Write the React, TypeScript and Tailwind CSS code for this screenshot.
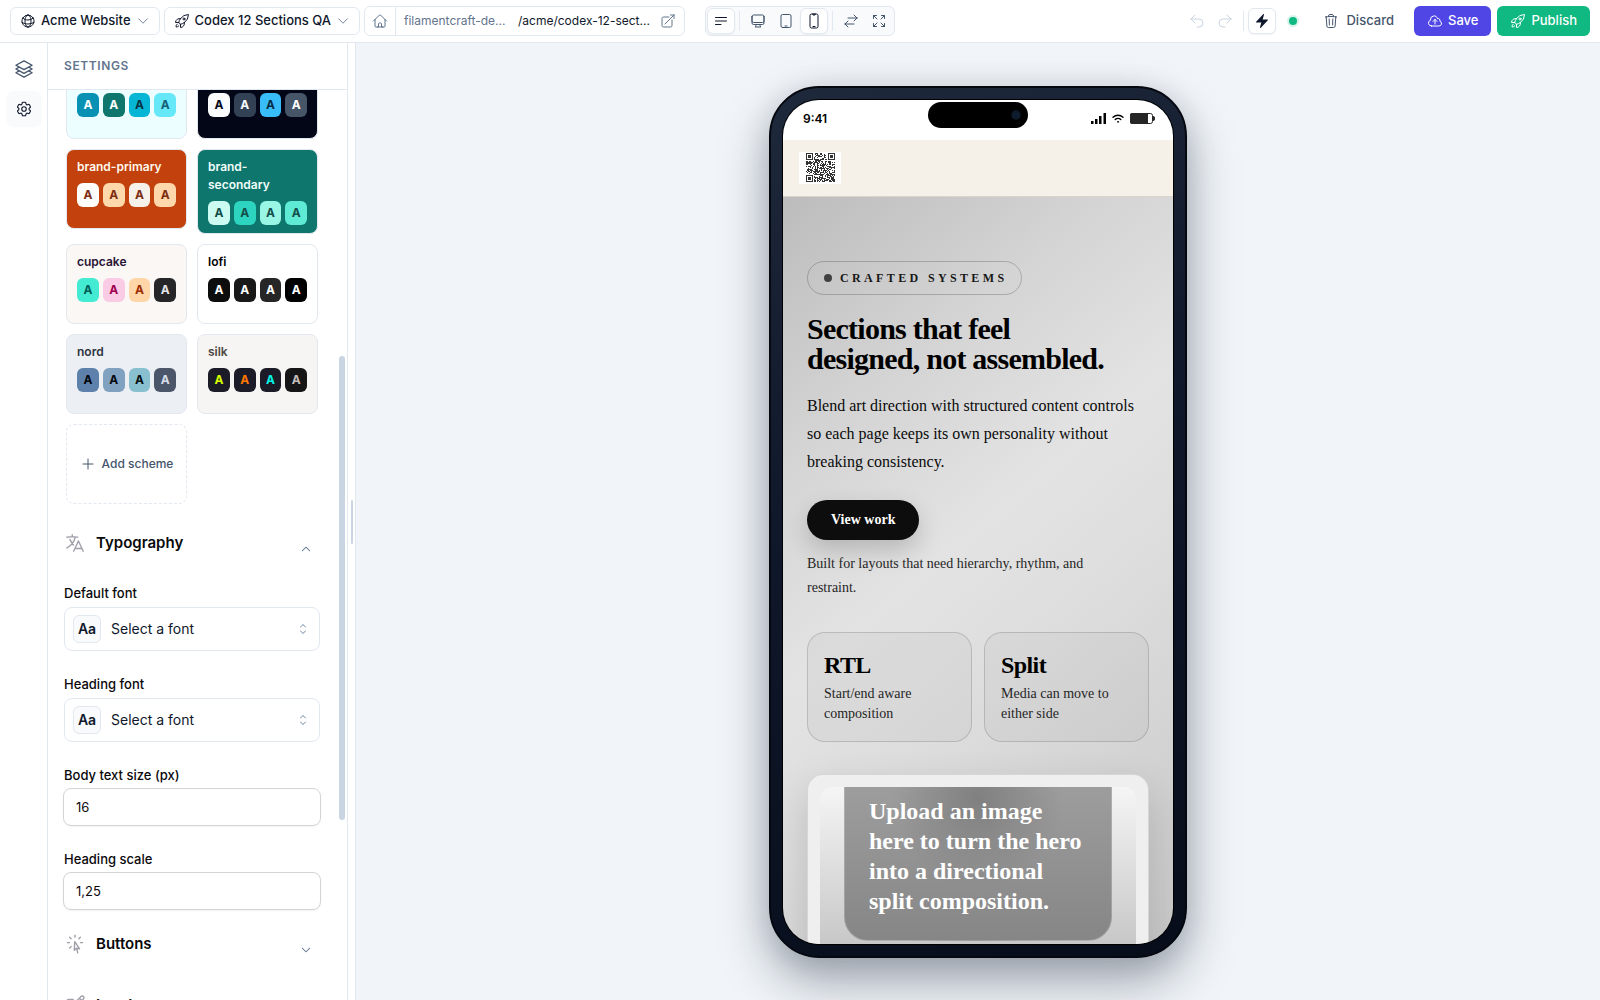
import type { ReactNode } from 'react'
import {
  HiBolt,
  HiChevronDown,
  HiChevronUp,
  HiChevronUpDown,
  HiOutlineArrowTopRightOnSquare,
  HiOutlineArrowUturnLeft,
  HiOutlineArrowUturnRight,
  HiOutlineArrowsPointingOut,
  HiOutlineArrowsRightLeft,
  HiOutlineBars3BottomLeft,
  HiOutlineChevronDown,
  HiOutlineCloudArrowUp,
  HiOutlineCog6Tooth,
  HiOutlineComputerDesktop,
  HiOutlineCursorArrowRays,
  HiOutlineDevicePhoneMobile,
  HiOutlineDeviceTablet,
  HiOutlineGlobeAlt,
  HiOutlineHome,
  HiOutlineLanguage,
  HiOutlinePencilSquare,
  HiOutlinePlus,
  HiOutlineRocketLaunch,
  HiOutlineSquare3Stack3D,
  HiOutlineTrash,
} from 'react-icons/hi2'

type Scheme = { id: string; name: string; card: string; swatches: string[] }

const schemes: Scheme[] = [
  {
    id: 's1',
    name: '',
    card: 'bg-[#ecfeff] border-slate-200',
    swatches: ['bg-[#0891b2] text-white', 'bg-[#0f766e] text-white', 'bg-[#06b6d4] text-[#083344]', 'bg-[#67e8f9] text-[#155e75]'],
  },
  {
    id: 's2',
    name: '',
    card: 'bg-[#020617] border-slate-200',
    swatches: ['bg-[#f8fafc] text-[#020617]', 'bg-[#334155] text-[#f8fafc]', 'bg-[#38bdf8] text-[#082f49]', 'bg-[#475569] text-white'],
  },
  {
    id: 's3',
    name: 'brand-primary',
    card: 'bg-[#c2410c] border-slate-200 text-[#fff7ed]',
    swatches: ['bg-[#fffdfa] text-[#7c2d12]', 'bg-[#fed7aa] text-[#7c2d12]', 'bg-[#f5f0e8] text-[#7c2d12]', 'bg-[#fed7aa] text-[#7c2d12]'],
  },
  {
    id: 's4',
    name: 'brand-secondary',
    card: 'bg-[#0f766e] border-slate-200 text-[#f0fdfa]',
    swatches: ['bg-[#ccfbf1] text-[#134e4a]', 'bg-[#2dd4bf] text-[#134e4a]', 'bg-[#99f6e4] text-[#134e4a]', 'bg-[#5eead4] text-[#134e4a]'],
  },
  {
    id: 's5',
    name: 'cupcake',
    card: 'bg-[#faf7f5] border-slate-200 text-[#291334]',
    swatches: ['bg-[#44ebd3] text-[#005d58]', 'bg-[#f9cbe5] text-[#a0004d]', 'bg-[#ffd6a7] text-[#9f2d00]', 'bg-[#262629] text-[#e4e4e7]'],
  },
  {
    id: 's6',
    name: 'lofi',
    card: 'bg-white border-slate-200 text-black',
    swatches: ['bg-[#0d0d0d] text-white', 'bg-[#1a1919] text-white', 'bg-[#262626] text-white', 'bg-black text-white'],
  },
  {
    id: 's7',
    name: 'nord',
    card: 'bg-[#eceff4] border-slate-200 text-[#2e3440]',
    swatches: ['bg-[#5e81ac] text-[#03060b]', 'bg-[#81a1c1] text-[#06090e]', 'bg-[#88c0d0] text-[#070e10]', 'bg-[#4c566a] text-[#d8dee9]'],
  },
  {
    id: 's8',
    name: 'silk',
    card: 'bg-[#f7f5f3] border-slate-200 text-[#4b4743]',
    swatches: ['bg-[#1c1c29] text-[#d9ff00]', 'bg-[#1c1c29] text-[#ff7700]', 'bg-[#1c1c29] text-[#00f5e4]', 'bg-[#161616] text-[#c4bfbb]'],
  },
]

function Divider() {
  return <span className="mx-1 h-5 w-px bg-slate-200" />
}

function IconButton({ label, active, children }: { label: string; active?: boolean; children: ReactNode }) {
  return (
    <button
      type="button"
      aria-label={label}
      className={
        active
          ? 'flex h-[26px] w-7 items-center justify-center rounded-md border border-slate-200 bg-white text-slate-900 shadow-xs'
          : 'flex h-[26px] w-7 items-center justify-center rounded-md text-slate-600'
      }
    >
      {children}
    </button>
  )
}

function TopBar() {
  return (
    <header className="flex h-[43px] shrink-0 items-center border-b border-slate-200 bg-white px-2.5 text-slate-900">
      <button type="button" className="flex h-7 items-center gap-[5px] rounded-md border border-slate-200 px-[9px] text-[13px] font-medium whitespace-nowrap">
        <HiOutlineGlobeAlt className="size-4" />
        Acme Website
        <HiOutlineChevronDown className="size-3.5 text-slate-500" />
      </button>
      <button type="button" className="ml-1 flex h-7 items-center gap-[5px] rounded-md border border-slate-200 px-[9px] text-[13px] font-medium whitespace-nowrap">
        <HiOutlineRocketLaunch className="size-4" />
        Codex 12 Sections QA
        <HiOutlineChevronDown className="size-3.5 text-slate-500" />
      </button>

      <div className="ml-1 flex h-[30px] w-[321px] items-center rounded-md border border-slate-200">
        <button type="button" aria-label="Home" className="flex h-full w-[31px] items-center justify-center border-r border-slate-200 text-slate-500">
          <HiOutlineHome className="size-4" />
        </button>
        <span className="ml-2 w-[114px] text-xs text-slate-500">filamentcraft-de...</span>
        <a href="#preview" className="flex flex-1 items-center justify-between pr-2 text-xs whitespace-nowrap">
          /acme/codex-12-sect...
          <HiOutlineArrowTopRightOnSquare className="size-4 text-slate-500" />
        </a>
      </div>

      <div className="ml-5 flex h-[30px] items-center rounded-md border border-slate-200 bg-slate-50 px-px">
        <IconButton label="Guides" active><HiOutlineBars3BottomLeft className="size-4" /></IconButton>
        <Divider />
        <IconButton label="Desktop"><HiOutlineComputerDesktop className="size-4" /></IconButton>
        <IconButton label="Tablet"><HiOutlineDeviceTablet className="size-4" /></IconButton>
        <IconButton label="Mobile" active><HiOutlineDevicePhoneMobile className="size-4" /></IconButton>
        <Divider />
        <IconButton label="Rotate"><HiOutlineArrowsRightLeft className="size-4" /></IconButton>
        <IconButton label="Full width"><HiOutlineArrowsPointingOut className="size-4" /></IconButton>
      </div>

      <div className="ml-auto flex items-center">
        <button type="button" aria-label="Undo" className="flex size-7 items-center justify-center text-slate-300">
          <HiOutlineArrowUturnLeft className="size-4" />
        </button>
        <button type="button" aria-label="Redo" className="flex size-7 items-center justify-center text-slate-300">
          <HiOutlineArrowUturnRight className="size-4" />
        </button>
        <Divider />
        <IconButton label="Live preview" active><HiBolt className="size-4" /></IconButton>
        <span className="ml-[11px] size-3 rounded-full border-2 border-[#d5f3e8] bg-[#10b981]" />
        <button type="button" className="ml-4 flex h-[30px] items-center gap-[7px] px-2 text-[13px] font-medium text-slate-600">
          <HiOutlineTrash className="size-4" />
          Discard
        </button>
        <button type="button" className="ml-3 flex h-[30px] items-center gap-[5px] rounded-md bg-[#4f46e5] px-[13px] text-[13px] font-medium text-white">
          <HiOutlineCloudArrowUp className="size-4" />
          Save
        </button>
        <button type="button" className="ml-1.5 flex h-[30px] items-center gap-[5px] rounded-md bg-[#10b981] px-[13px] text-[13px] font-medium text-white">
          <HiOutlineRocketLaunch className="size-4" />
          Publish
        </button>
      </div>
    </header>
  )
}

function SideRail() {
  return (
    <nav className="flex w-12 shrink-0 flex-col items-center gap-1 border-r border-slate-200 bg-white pt-2">
      <button type="button" aria-label="Sections" className="flex size-9 items-center justify-center rounded-lg text-slate-600">
        <HiOutlineSquare3Stack3D className="size-5" />
      </button>
      <button type="button" aria-label="Settings" className="flex size-9 items-center justify-center rounded-lg bg-slate-50 text-slate-900">
        <HiOutlineCog6Tooth className="size-[18px]" />
      </button>
    </nav>
  )
}

function SchemeCard({ scheme }: { scheme: Scheme }) {
  return (
    <div className={`min-h-20 rounded-lg border px-2.5 py-2 ${scheme.card}`}>
      <div className="min-h-[18px] text-xs leading-[18px] font-semibold">{scheme.name}</div>
      <div className="mt-[7px] grid grid-cols-4 gap-1">
        {scheme.swatches.map((swatch, i) => (
          <span key={i} className={`flex h-6 items-center justify-center rounded-md text-xs font-bold ${swatch}`}>
            A
          </span>
        ))}
      </div>
    </div>
  )
}

function GroupHeader({ icon, title, open }: { icon: ReactNode; title: string; open?: boolean }) {
  return (
    <button type="button" className="flex w-full items-center pr-2 text-left">
      <span className="text-zinc-400">{icon}</span>
      <span className="ml-2.5 text-[15px] leading-6 font-semibold text-zinc-950">{title}</span>
      <span className="mt-3 ml-auto text-slate-500">
        {open ? <HiChevronUp className="size-3" /> : <HiChevronDown className="size-3" />}
      </span>
    </button>
  )
}

function FontField({ id, label }: { id: string; label: string }) {
  return (
    <div>
      <label htmlFor={id} className="block text-[13px] leading-5 font-medium text-zinc-950">{label}</label>
      <div className="mt-1 flex h-11 items-center rounded-lg border border-slate-200 px-2">
        <span className="flex size-7 items-center justify-center rounded-md border border-slate-200 bg-slate-50 text-sm font-semibold text-slate-900">
          Aa
        </span>
        <select id={id} className="ml-2.5 flex-1 appearance-none bg-transparent text-sm text-slate-900">
          <option>Select a font</option>
        </select>
        <HiChevronUpDown className="size-4 text-slate-400" />
      </div>
    </div>
  )
}

function NumberField({ id, label, value }: { id: string; label: string; value: string }) {
  return (
    <div>
      <label htmlFor={id} className="block text-[13px] leading-5 font-medium text-zinc-950">{label}</label>
      <input
        id={id}
        defaultValue={value}
        className="-mx-px mt-[3px] block h-[38px] w-[258px] rounded-lg border border-zinc-300 px-3 text-[13px] text-zinc-950 shadow-xs"
      />
    </div>
  )
}

function SettingsPanel() {
  return (
    <aside className="flex w-[300px] shrink-0 flex-col border-r border-slate-200 bg-white">
      <h2 className="flex h-[47px] shrink-0 items-center border-b border-slate-200 px-4 text-xs font-semibold tracking-wider text-slate-500">
        SETTINGS
      </h2>
      <div className="flex min-h-0 flex-1 justify-between overflow-hidden">
        <div className="-mt-[31px] w-[272px] pl-4">
          <div className="ml-0.5 grid w-[252px] grid-cols-2 items-start gap-2.5">
            {schemes.map((scheme) => (
              <SchemeCard key={scheme.id} scheme={scheme} />
            ))}
            <button type="button" className="flex h-20 items-center justify-center gap-1.5 rounded-lg border border-dashed border-slate-200 text-xs font-medium text-slate-600">
              <HiOutlinePlus className="size-4" />
              Add scheme
            </button>
          </div>

          <div className="mt-[27px]">
            <GroupHeader icon={<HiOutlineLanguage className="size-[22px]" />} title="Typography" open />
          </div>
          <div className="mt-7 flex flex-col gap-[23px]">
            <FontField id="default-font" label="Default font" />
            <FontField id="heading-font" label="Heading font" />
            <NumberField id="body-size" label="Body text size (px)" value="16" />
            <NumberField id="heading-scale" label="Heading scale" value="1,25" />
          </div>
          <div className="mt-[22px]">
            <GroupHeader icon={<HiOutlineCursorArrowRays className="size-[22px]" />} title="Buttons" />
          </div>
          <div className="mt-[37px]">
            <GroupHeader icon={<HiOutlinePencilSquare className="size-[22px]" />} title="Inputs" />
          </div>
        </div>
        <div className="mt-[266px] mr-0.5 h-[464px] w-1.5 rounded-full bg-slate-300" />
      </div>
    </aside>
  )
}

const QR_SIZE = 29

function inFinder(x: number, y: number) {
  return (x < 8 && y < 8) || (x > QR_SIZE - 9 && y < 8) || (x < 8 && y > QR_SIZE - 9)
}

function QrCode() {
  const cells: string[] = []
  let seed = 41
  for (let y = 0; y < QR_SIZE; y++) {
    for (let x = 0; x < QR_SIZE; x++) {
      seed = (seed * 1103515245 + 12345) % 2147483648
      if (!inFinder(x, y) && seed / 2147483648 > 0.48) cells.push(`M${x} ${y}h1v1h-1z`)
    }
  }
  const corners = [[0, 0], [QR_SIZE - 7, 0], [0, QR_SIZE - 7]]
  return (
    <svg viewBox="0 0 29 29" className="size-[29px]" fill="#333">
      <path d={cells.join('')} />
      {corners.map(([x, y]) => (
        <g key={`${x}-${y}`}>
          <rect x={x + 0.5} y={y + 0.5} width="6" height="6" fill="none" stroke="#333" />
          <rect x={x + 2} y={y + 2} width="3" height="3" />
        </g>
      ))}
    </svg>
  )
}

function StatusBar() {
  return (
    <div className="grid h-10 shrink-0 grid-cols-[1fr_100px_1fr] bg-white text-black">
      <span className="pt-[10px] pl-5 text-xs leading-[18px] font-semibold">9:41</span>
      <span className="mt-0.5 flex h-[26px] items-center justify-end rounded-full bg-black pr-2">
        <span className="size-2 rounded-full bg-[#0f1b2e] ring-1 ring-[#0c121c]" />
      </span>
      <span className="flex h-[38px] items-center justify-end gap-1.5 pr-[18px]">
        <svg viewBox="0 0 15 11" className="h-[11px] w-[15px]">
          <path d="M0 8h2.500v3H0zM4 6h2.500v5H4zM8 3h2.500v8H8zM12.500 0H15v11h-2.500z" />
        </svg>
        <svg viewBox="0 0 12 9" className="h-[9px] w-3" fill="none" stroke="currentColor" strokeWidth="1.400" strokeLinecap="round">
          <path d="M1 3.200a7.200 7.200 0 0 1 10 0M3.200 5.600a4 4 0 0 1 5.600 0" />
          <circle cx="6" cy="7.800" r=".6" fill="currentColor" strokeWidth=".6" />
        </svg>
        <svg viewBox="0 0 25 11" className="h-[11px] w-[25px]">
          <rect x=".5" y=".5" width="22" height="10" rx="2" fill="#fff" stroke="#262626" />
          <path d="M2 0h16v11H2a2 2 0 0 1-2-2V2a2 2 0 0 1 2-2z" fill="#262626" />
          <path d="M23 3.500a2 2 0 0 1 0 4z" fill="#262626" stroke="#262626" />
        </svg>
      </span>
    </div>
  )
}

function Stat({ value, text }: { value: string; text: string }) {
  return (
    <div className="h-[110px] rounded-[18px] border border-black/15 bg-black/[0.03] px-4 pt-4">
      <div className="text-2xl leading-8 font-bold tracking-tight text-black">{value}</div>
      <p className="mt-[3px] text-sm leading-5 text-neutral-800">{text}</p>
    </div>
  )
}

function HeroPreview() {
  return (
    <section className="min-h-0 flex-1 overflow-hidden bg-[linear-gradient(140deg,#bcbcbc_0%,#d4d4d4_25%,#e3e3e3_46%,#dddddd_62%,#c8c8c8_100%)] px-6 pt-16 font-['Liberation_Serif',serif]">
      <div className="flex h-[34px] w-fit items-center gap-2 rounded-full border border-black/20 pr-3.5 pl-4 text-xs font-bold tracking-[0.28em] text-neutral-900">
        <span className="size-2 rounded-full bg-neutral-700" />
        CRAFTED SYSTEMS
      </div>
      <h1 className="mt-[19px] text-[30px] leading-[30px] font-bold tracking-tight text-black">
        Sections that feel<br />designed, not assembled.
      </h1>
      <p className="mt-[18px] text-base leading-7 text-neutral-950">
        Blend art direction with structured content controls so each page keeps its own personality without breaking consistency.
      </p>
      <button type="button" className="mt-6 flex h-10 items-center rounded-full bg-[#0d0d0d] px-6 text-sm font-bold text-white shadow-[0_10px_24px_rgba(0,0,0,0.18)]">
        View work
      </button>
      <p className="mt-3 text-sm leading-6 text-neutral-800">
        Built for layouts that need hierarchy, rhythm, and<br />restraint.
      </p>
      <div className="mt-8 grid grid-cols-2 gap-3">
        <Stat value="RTL" text="Start/end aware composition" />
        <Stat value="Split" text="Media can move to either side" />
      </div>
      <div className="mt-8 h-[400px] rounded-2xl border border-black/10 bg-[#efefef] p-3 shadow-[0_16px_40px_rgba(0,0,0,0.15)]">
        <div className="h-full rounded-xl bg-[linear-gradient(180deg,#f5f5f5_0%,#c4c4c4_170px)] px-6">
          <div className="h-[154px] rounded-b-3xl border border-t-0 border-white/20 bg-[radial-gradient(ellipse_at_50%_8%,#808080_0%,transparent_45%),linear-gradient(180deg,#9d9d9d_0%,#868686_100%)] px-6 pt-[9px] text-2xl leading-[30px] font-bold text-white">
            Upload an image here to turn the hero into a directional split composition.
          </div>
        </div>
      </div>
    </section>
  )
}

function Phone() {
  return (
    <div className="flex h-[872px] w-[418px] flex-col rounded-[50px] border-2 border-[#05080f] bg-[linear-gradient(160deg,#1e293b_0%,#0f172a_45%,#070d1a_100%)] p-3 shadow-[0_24px_50px_rgba(15,23,42,0.35),0_4px_30px_rgba(15,23,42,0.12)]">
      <div className="flex min-h-0 flex-1 flex-col overflow-hidden rounded-[36px] shadow-[0_0_0_1px_#000]">
        <StatusBar />
        <div className="flex h-[57px] shrink-0 items-center border-b border-[#d8d4cd] bg-[#f5f0e8] pl-4">
          <span className="flex h-8 w-[42px] items-center justify-center bg-white">
            <QrCode />
          </span>
        </div>
        <HeroPreview />
      </div>
    </div>
  )
}

export default function App() {
  return (
    <div className="flex h-screen flex-col overflow-hidden bg-white font-['Inter',sans-serif]">
      <TopBar />
      <div className="flex min-h-0 flex-1">
        <SideRail />
        <SettingsPanel />
        <div className="flex w-2 shrink-0 items-center justify-center border-r border-slate-200 bg-white">
          <span className="h-11 w-0.5 rounded-full bg-slate-300" />
        </div>
        <main className="flex flex-1 items-center justify-center bg-slate-100">
          <Phone />
        </main>
      </div>
    </div>
  )
}
